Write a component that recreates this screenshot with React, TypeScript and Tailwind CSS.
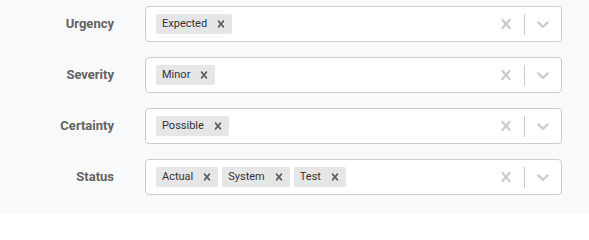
import React from "react";

const rows: { label: string; values: string[] }[] = [
  { label: "Urgency", values: ["Expected"] },
  { label: "Severity", values: ["Minor"] },
  { label: "Certainty", values: ["Possible"] },
  { label: "Status", values: ["Actual", "System", "Test"] },
];

const CrossPath =
  "M14.348 14.849c-0.469 0.469-1.229 0.469-1.697 0l-2.651-3.030-2.651 3.029c-0.469 0.469-1.229 0.469-1.697 0-0.469-0.469-0.469-1.229 0-1.697l2.758-3.15-2.759-3.152c-0.469-0.469-0.469-1.228 0-1.697s1.228-0.469 1.697 0l2.652 3.031 2.651-3.031c0.469-0.469 1.228-0.469 1.697 0s0.469 1.229 0 1.697l-2.758 3.152 2.758 3.15c0.469 0.469 0.469 1.229 0 1.698z";
const ChevronPath =
  "M4.516 7.548c0.436-0.446 1.043-0.481 1.576 0l3.908 3.747 3.908-3.747c0.533-0.481 1.141-0.446 1.574 0 0.436 0.445 0.408 1.197 0 1.615-0.406 0.418-4.695 4.502-4.695 4.502-0.217 0.223-0.502 0.335-0.787 0.335s-0.57-0.112-0.789-0.335c0 0-4.287-4.084-4.695-4.502s-0.436-1.17 0-1.615z";

function Chip({ text }: { text: string }) {
  return (
    <div className="flex items-center bg-[#e6e6e6] rounded-[2px] m-[2px] h-[20px]">
      <span className="pl-[6px] pr-[3px] text-[11px] leading-[14px] text-[#333333]">{text}</span>
      <span className="flex items-center px-[4px] h-full text-[#5a5a5a]">
        <svg width="14" height="14" viewBox="0 0 20 20" fill="currentColor">
          <path d={CrossPath} />
        </svg>
      </span>
    </div>
  );
}

export default function App() {
  return (
    <div
      className="w-[589px] h-[213px] bg-[#f8f9fa] pt-[6px] flex flex-col gap-[15px]"
      style={{ fontFamily: "Roboto, 'Liberation Sans', sans-serif" }}
    >
      {rows.map((r) => (
        <div key={r.label} className="flex items-center">
          <div className="w-[114px] text-right text-[13px] font-bold text-[#636363]">{r.label}</div>
          <div className="ml-[31px] w-[417px] h-[36px] bg-white border border-[#cccccc] rounded-[4px] flex items-center">
            <div className="flex-1 flex items-center px-[8px]">
              {r.values.map((v) => (
                <Chip key={v} text={v} />
              ))}
            </div>
            <div className="flex items-center h-full">
              <div className="p-[8px] text-[#cccccc]">
                <svg width="20" height="20" viewBox="0 0 20 20" fill="currentColor">
                  <path d={CrossPath} />
                </svg>
              </div>
              <div className="w-px h-[21px] bg-[#cccccc]" />
              <div className="p-[8px] text-[#cccccc]">
                <svg width="20" height="20" viewBox="0 0 20 20" fill="currentColor">
                  <path d={ChevronPath} />
                </svg>
              </div>
            </div>
          </div>
        </div>
      ))}
    </div>
  );
}
